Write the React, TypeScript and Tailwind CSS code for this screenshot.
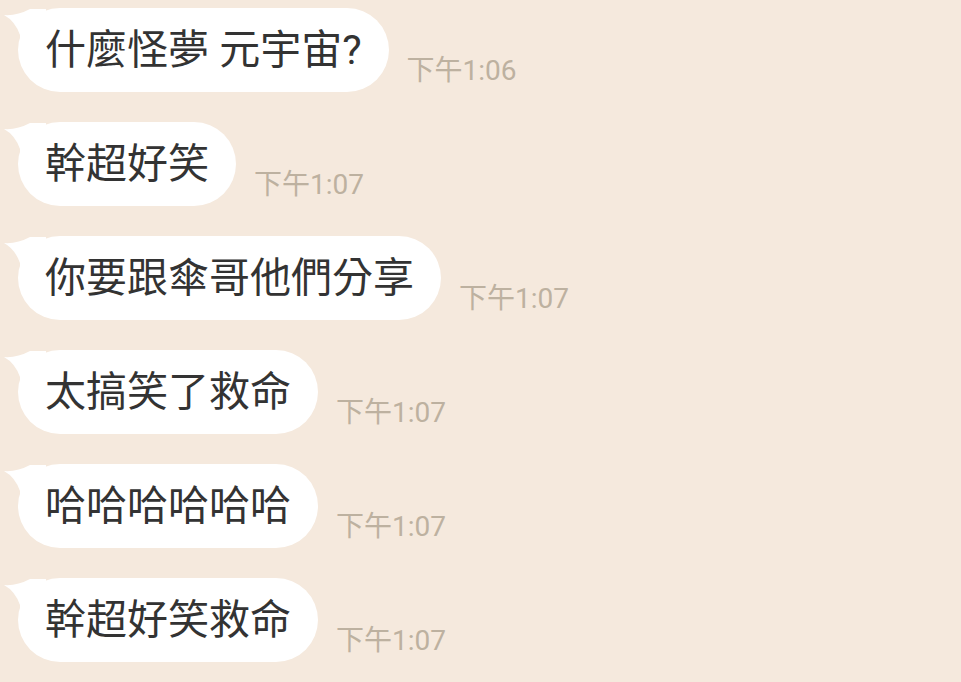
import React from 'react';

const messages = [
  { text: '什麼怪夢 元宇宙?', time: '下午1:06' },
  { text: '幹超好笑', time: '下午1:07' },
  { text: '你要跟傘哥他們分享', time: '下午1:07' },
  { text: '太搞笑了救命', time: '下午1:07' },
  { text: '哈哈哈哈哈哈', time: '下午1:07' },
  { text: '幹超好笑救命', time: '下午1:07' },
];

const Tail: React.FC = () => (
  <svg
    className="absolute left-[-16px] top-0"
    width="44"
    height="40"
    viewBox="0 0 44 40"
  >
    <path d="M2 7 Q15 8 28 1 L44 1 L44 40 L18 40 L18 27 Q13 13 2 7 Z" fill="#ffffff" />
  </svg>
);

const Bubble: React.FC<{ text: string; time: string }> = ({ text, time }) => (
  <div className="flex items-end">
    <div className="relative">
      <Tail />
      <div className="relative h-[84px] flex items-center rounded-full bg-white px-[27px] text-[41px] text-[#333333] leading-none whitespace-pre">
        {text}
      </div>
    </div>
    <span className="ml-[18px] mb-[7px] text-[28px] leading-none text-[#bdb1a0] whitespace-nowrap">
      {time}
    </span>
  </div>
);

const App: React.FC = () => {
  return (
    <div
      className="w-[961px] h-[682px] overflow-hidden bg-[#f5e9dd] pl-[18px] pt-[8px]"
      style={{ fontFamily: 'Roboto, "Noto Sans CJK TC", sans-serif' }}
    >
      <div className="flex flex-col items-start gap-[30px]">
        {messages.map((m, i) => (
          <Bubble key={i} text={m.text} time={m.time} />
        ))}
      </div>
    </div>
  );
};

export default App;
